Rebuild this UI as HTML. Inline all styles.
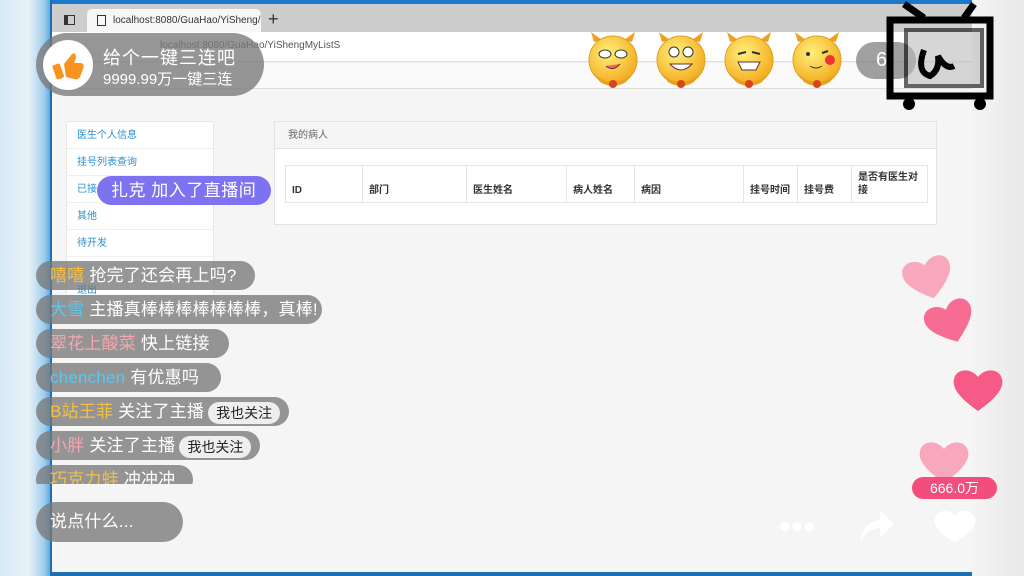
<!DOCTYPE html>
<html><head><meta charset="utf-8"><style>
*{margin:0;padding:0;box-sizing:border-box}
body{width:1024px;height:576px;overflow:hidden;position:relative;background:#f0f0f0;font-family:"Liberation Sans","Noto Sans CJK SC",sans-serif}
.a{position:absolute}
.pill{position:absolute;background:rgba(120,120,120,.78);border-radius:16px;color:#fff;font-size:17px;height:29px;line-height:29px;padding:0 12px 0 14px;white-space:nowrap;letter-spacing:.2px}
.btn{display:inline-block;background:#eee;color:#222;border-radius:12px;font-size:14px;height:22px;line-height:22px;padding:0 8px;vertical-align:middle;margin-left:4px;letter-spacing:0}
.side div{height:27px;line-height:27px;border-bottom:1px solid #eee;padding-left:10px;font-size:10px;color:#2a8fd0}
th{font-size:10px;color:#333;font-weight:bold;text-align:left;border-right:1px solid #e6e6e6;padding:0 6px;vertical-align:bottom;padding-bottom:6px}
</style></head><body>
<div class="a" style="left:0;top:0;width:52px;height:576px;background:linear-gradient(90deg,#d6eaf6,#e9f2f8 55%,#9fcdec 85%,#4aa0d8)"></div>
<div class="a" style="left:52px;top:0;width:920px;height:4px;background:#1c78c8"></div>
<div class="a" style="left:972px;top:0;width:52px;height:576px;background:linear-gradient(90deg,#f4f4f4,#e9e9e9)"></div>
<div class="a" style="left:50px;top:0;width:2px;height:576px;background:#1a6fb5"></div>
<div class="a" style="left:52px;top:4px;width:920px;height:28px;background:#cdcdcd"></div>
<div class="a" style="left:87px;top:9px;width:174px;height:24px;background:#f7f7f7;border-radius:5px 5px 0 0;font-size:10px;line-height:24px;padding-left:26px;color:#333">localhost:8080/GuaHao/YiSheng/ <span style="margin-left:6px">✕</span></div>
<div class="a" style="left:97px;top:15px;width:9px;height:11px;border:1px solid #333"></div>
<div class="a" style="left:64px;top:15px;width:11px;height:10px;border:1.5px solid #333;border-left-width:4px"></div>
<div class="a" style="left:268px;top:9px;font-size:18px;color:#333">+</div>
<div class="a" style="left:52px;top:32px;width:920px;height:30px;background:#fff;border-bottom:1px solid #ddd"></div>
<div class="a" style="left:160px;top:40px;font-size:10px;color:#555">localhost:8080/GuaHao/YiShengMyListS</div>
<div class="a" style="left:52px;top:63px;width:920px;height:26px;background:#fafafa;border-bottom:1px solid #ddd"></div>
<div class="a" style="left:52px;top:89px;width:920px;height:483px;background:#f5f5f5"></div>
<div class="a" style="left:52px;top:572px;width:920px;height:4px;background:#1a6fb5"></div>
<div class="a side" style="left:66px;top:121px;width:148px;height:175px;background:#fff;border:1px solid #e6e6e6;border-radius:3px">
<div>医生个人信息</div><div>挂号列表查询</div><div>已接诊</div><div>其他</div><div>待开发</div><div style="border:0;padding-top:28px;line-height:12px">退出</div></div>
<div class="a" style="left:274px;top:121px;width:663px;height:104px;background:#fff;border:1px solid #e3e3e3">
<div style="height:27px;background:#f5f5f5;border-bottom:1px solid #e3e3e3;font-size:10px;color:#666;line-height:27px;padding-left:13px">我的病人</div>
<table style="position:absolute;left:10px;top:43px;width:643px;height:38px;border:1px solid #e6e6e6;border-collapse:collapse"><tr>
<th style="width:77px">ID</th><th style="width:104px">部门</th><th style="width:100px">医生姓名</th><th style="width:68px">病人姓名</th><th style="width:109px">病因</th><th style="width:54px">挂号时间</th><th style="width:54px">挂号费</th><th style="border:0;vertical-align:middle;padding-bottom:0;line-height:13px">是否有医生对接</th></tr></table></div>

<div class="pill" style="left:36px;top:33px;width:228px;height:63px;border-radius:32px"></div>
<div class="a" style="left:43px;top:40px;width:50px;height:50px;border-radius:50%;background:#fff"></div>
<svg class="a" style="left:52px;top:50px" width="34" height="32" viewBox="0 0 34 32"><rect x="2" y="14" width="8" height="15" rx="2" fill="#f7931e" transform="rotate(-20 6 21)"/><path d="M12 14 L20 4 Q24 2 24 8 L22 13 L29 13 Q33 14 31 19 L28 27 Q26 30 22 29 L14 27 Z" fill="#f7931e"/></svg>
<div class="a" style="left:103px;top:44px;color:#fff;font-size:18px;letter-spacing:1px">给个一键三连吧</div>
<div class="a" style="left:103px;top:68px;color:#fff;font-size:15px">9999.99万一键三连</div>

<div class="a" style="left:97px;top:176px;width:174px;height:29px;background:#7d73f0;border-radius:15px;color:#fff;font-size:17px;line-height:29px;padding-left:14px;letter-spacing:.5px">扎克 加入了直播间</div>

<div class="pill" style="left:36px;top:261px;width:219px"><span style="color:#f5c040">嘻嘻</span> 抢完了还会再上吗?</div>
<div class="pill" style="left:36px;top:295px;width:286px"><span style="color:#58c8f0">大雪</span> 主播真棒棒棒棒棒棒棒，真棒!</div>
<div class="pill" style="left:36px;top:329px;width:193px"><span style="color:#f4a7b0">翠花上酸菜</span> 快上链接</div>
<div class="pill" style="left:36px;top:363px;width:185px"><span style="color:#58c8f0">chenchen</span> 有优惠吗</div>
<div class="pill" style="left:36px;top:397px;width:253px;padding-right:4px"><span style="color:#f5c040">B站王菲</span> 关注了主播<span class="btn">我也关注</span></div>
<div class="pill" style="left:36px;top:431px;width:224px;padding-right:4px"><span style="color:#f4a7b0">小胖</span> 关注了主播<span class="btn">我也关注</span></div>
<div class="a" style="left:36px;top:465px;width:157px;height:19px;overflow:hidden"><div class="pill" style="left:0;top:0;width:157px"><span style="color:#f5c040">巧克力蛙</span> 冲冲冲</div></div>
<div class="pill" style="left:36px;top:502px;width:147px;height:40px;line-height:40px;border-radius:20px">说点什么...</div>

<div class="a" style="left:856px;top:42px;width:60px;height:37px;border-radius:19px;background:rgba(120,120,120,.7);color:#fff;font-size:20px;line-height:37px;padding-left:20px">6</div>
<svg class="a" style="left:586px;top:32px" width="330" height="58">
<defs><radialGradient id="g" cx=".4" cy=".35" r=".7"><stop offset="0" stop-color="#fff07a"/><stop offset="1" stop-color="#f2a81c"/></radialGradient></defs>
<g id="f"><path d="M8 10 L5 0 L16 8Z M46 10 L49 0 L38 8Z" fill="#f0a020"/><circle cx="27" cy="28" r="24" fill="url(#g)" stroke="#e0a020"/><path d="M8 42 Q27 58 46 42 L40 50 Q27 58 14 50Z" fill="#e8a020"/><circle cx="27" cy="52" r="4" fill="#d8441e"/></g>
<use href="#f" x="68"/><use href="#f" x="136"/><use href="#f" x="204"/>
<g fill="#fff" stroke="#333"><ellipse cx="19" cy="22" rx="6" ry="4"/><ellipse cx="35" cy="22" rx="6" ry="4"/><circle cx="88" cy="20" r="5"/><circle cx="102" cy="20" r="5"/></g>
<path d="M20 34 Q27 40 34 32" stroke="#733" fill="#e66" />
<path d="M84 32 Q95 44 106 32Z M152 30 L174 30 L170 38 L156 38Z" fill="#fff" stroke="#633"/>
<path d="M152 22 L160 20 M166 20 L174 22" stroke="#333" stroke-width="2"/>
<circle cx="244" cy="28" r="5" fill="#e33"/><circle cx="222" cy="22" r="2" fill="#333"/><path d="M236 21 l6 -2" stroke="#333" stroke-width="2"/><path d="M224 34 Q230 38 236 34" stroke="#333" fill="none"/>
</svg>
<svg class="a" style="left:884px;top:0" width="116" height="114"><g stroke="#000" stroke-width="7" fill="none"><path d="M20 4 L40 18 M90 4 L80 18"/><rect x="6" y="20" width="100" height="76" /></g><rect x="22" y="30" width="76" height="56" fill="#bbb" opacity=".6" stroke="#000" stroke-width="4"/><path d="M40 50 Q32 72 46 76 Q56 70 54 56 Q62 70 70 66" stroke="#000" stroke-width="6" fill="none"/><circle cx="25" cy="104" r="6" fill="#000"/><circle cx="96" cy="104" r="6" fill="#000"/></svg>

<svg class="a" style="left:890px;top:255px" width="134" height="270" viewBox="0 0 134 270">
<defs><path id="h" d="M26 44 C6 30 0 20 2 12 C4 2 18 0 26 10 C34 0 48 2 50 12 C52 20 46 30 26 44Z"/></defs>
<use href="#h" fill="#f7a8bd" transform="translate(12 0) rotate(-15 26 22)"/>
<use href="#h" fill="#f76c93" transform="translate(34 44) rotate(-20 26 22)"/>
<use href="#h" fill="#f55b86" transform="translate(62 112)"/>
<use href="#h" fill="#f7a8bd" transform="translate(28 184)"/>
</svg>
<div class="a" style="left:912px;top:477px;width:85px;height:22px;border-radius:11px;background:#f24d7b;color:#fff;font-size:14px;line-height:22px;text-align:center">666.0万</div>
<div class="a" style="left:778px;top:521px;color:#fff;font-size:22px;line-height:10px;letter-spacing:-1px">●●●</div>
<svg class="a" style="left:856px;top:506px" width="40" height="40"><path d="M4 36 Q6 16 24 14 L24 4 L38 18 L24 32 L24 22 Q12 22 4 36Z" fill="#fff"/></svg>
<svg class="a" style="left:933px;top:509px" width="44" height="36"><path d="M22 34 C6 24 0 16 2 9 C4 1 16 -1 22 7 C28 -1 40 1 42 9 C44 16 38 24 22 34Z" fill="#fff"/></svg>
</body></html>
